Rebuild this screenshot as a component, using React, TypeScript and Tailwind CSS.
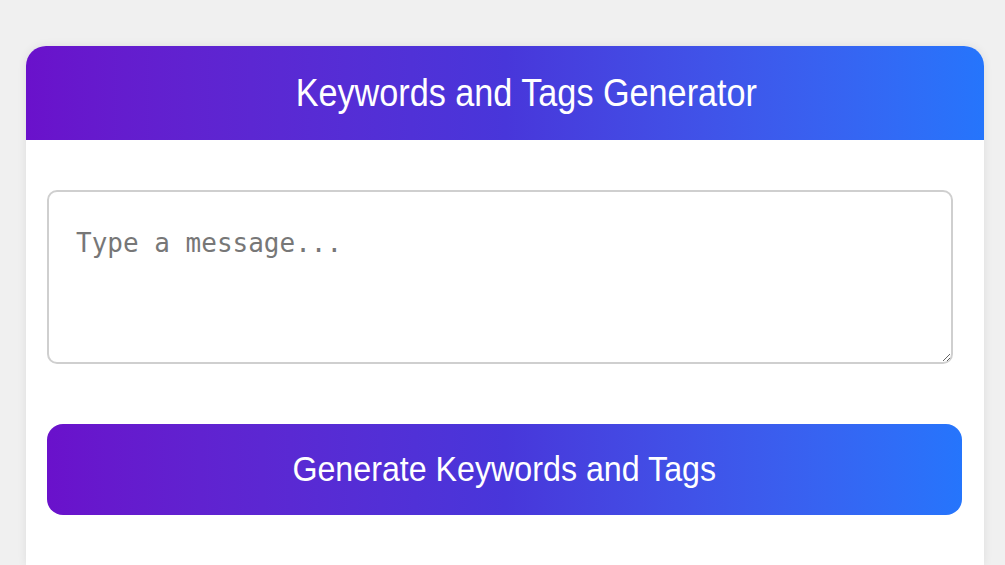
import React from 'react';

const App: React.FC = () => {
  return (
    <div className="min-h-screen bg-[#f0f0f0] pt-[46px] pl-[26px] font-['Liberation_Sans',Arial,sans-serif]">
      <div className="w-[958px] min-h-[519px] bg-white rounded-t-[20px] shadow-[0_0_10px_rgba(0,0,0,0.08)]">
        {/* Header */}
        <div className="h-[94px] flex items-center justify-center pl-[42px] rounded-t-[20px] bg-gradient-to-r from-[#6a11cb] via-[#4836da] to-[#2575fc]">
          <h1 className="text-white text-[38px] leading-none scale-x-[0.9]">Keywords and Tags Generator</h1>
        </div>

        {/* Body */}
        <div className="pl-[21px] pt-[50px]">
          <textarea
            placeholder="Type a message..."
            className="block w-[906px] h-[174px] border-2 border-[#cfcfcf] rounded-[10px] px-[27px] pt-[36px] text-[26px] leading-[30px] font-['DejaVu_Sans_Mono',monospace] placeholder:text-[#777] outline-none"
          />
          <button className="mt-[60px] w-[915px] h-[91px] rounded-[16px] bg-gradient-to-r from-[#6a11cb] via-[#4836da] to-[#2575fc] text-white">
            <span className="inline-block text-[35px] leading-none scale-x-[0.92]">Generate Keywords and Tags</span>
          </button>
        </div>
      </div>
    </div>
  );
};

export default App;
